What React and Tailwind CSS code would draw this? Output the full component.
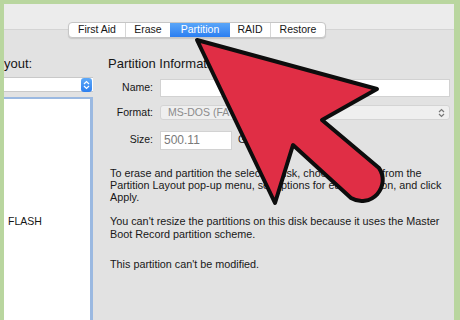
import React from 'react';

const font = { fontFamily: '"Liberation Sans", Arial, sans-serif' };

const tabs = [
  { label: 'First Aid', w: 'w-[56px]' },
  { label: 'Erase', w: 'w-[45px]' },
  { label: 'Partition', w: 'w-[60px]', active: true },
  { label: 'RAID', w: 'w-[40px]' },
  { label: 'Restore', w: 'w-[55px]' },
];

function Stepper({ blue }) {
  return (
    <svg width="7" height="10" viewBox="0 0 7 10" fill="none" stroke={blue ? '#fff' : '#777'} strokeWidth="1.2">
      <path d="M1 4 L3.5 1.5 L6 4" />
      <path d="M1 6 L3.5 8.5 L6 6" />
    </svg>
  );
}

function Row({ label, mt, children }) {
  return (
    <div className={`flex items-center gap-[7px] ${mt}`}>
      <div className="w-[45px] shrink-0 text-right text-[10.5px] text-[#161616]">{label}</div>
      {children}
    </div>
  );
}

export default function App() {
  return (
    <div className="relative w-[460px] h-[320px] overflow-hidden bg-[#b9d69f] pt-[4px] pl-[4px] pr-[6px]" style={font}>
      <div className="h-full flex flex-col bg-[#e2e2e2]">
        {/* title area */}
        <div className="h-[26px] shrink-0 bg-[#ececec] border-b border-[#d4d4d4]" />

        {/* segmented tabs */}
        <div className="-mt-[8px] ml-[64px] flex h-[16px] w-fit rounded-[4px] border border-[#c6c6c6] bg-white shadow-[0_1px_1px_rgba(0,0,0,0.12)] overflow-hidden text-[10.5px] text-[#161616]">
          {tabs.map((t, i) => (
            <div
              key={t.label}
              className={`${t.w} flex items-center justify-center ${i > 0 && !t.active && !tabs[i - 1].active ? 'border-l border-[#d6d6d6]' : ''} ${t.active ? 'bg-gradient-to-b from-[#5aa6f8] to-[#2b7ef1] text-white' : ''}`}
            >
              {t.label}
            </div>
          ))}
        </div>

        <div className="flex flex-1 min-h-0">
          {/* left: layout */}
          <div className="w-[89px] shrink-0 flex flex-col overflow-hidden">
            <div className="mt-[18px] h-[16px] leading-[16px] text-[13px] text-[#161616]">yout:</div>
            <div className="mt-[5px] h-[15px] flex items-center justify-end bg-white border-y border-[#c9c9c9] pr-[1px]">
              <div className="w-[11px] h-[14px] rounded-[3px] bg-gradient-to-b from-[#5ea9f8] to-[#2c7ff0] flex items-center justify-center">
                <Stepper blue />
              </div>
            </div>
            <div className="mt-[5px] flex-1 bg-white border-t-2 border-r-[3px] border-[#9bb9e1]">
              <div className="pt-[116px] pl-[4px] text-[10.5px] leading-[12px] text-[#161616]">FLASH</div>
            </div>
          </div>

          {/* right: partition information */}
          <div className="flex-1 pl-[15px] pr-[4px] flex flex-col">
            <div className="mt-[18px] h-[16px] leading-[16px] text-[13px] text-[#161616]">Partition Information</div>

            <Row label="Name:" mt="mt-[7px]">
              <div className="flex-1 h-[18px] bg-white border border-[#d2d2d2]" />
            </Row>

            <Row label="Format:" mt="mt-[8px]">
              <div className="flex-1 h-[15px] flex items-center justify-between rounded-[3px] bg-[#efefef] border border-[#d4d4d4] pl-[7px] pr-[4px] text-[10.5px] text-[#8c8c8c]">
                <span>MS-DOS (FAT)</span>
                <Stepper />
              </div>
            </Row>

            <Row label="Size:" mt="mt-[10px]">
              <div className="w-[72px] h-[19px] flex items-center bg-white border border-[#d2d2d2] pl-[3px] text-[12px] text-[#7a7a7a]">500.11</div>
              <span className="-ml-[1px] text-[10.5px] text-[#161616]">GB</span>
            </Row>

            <div className="mt-[17px] pl-[2px] text-[10.8px] leading-[12px] text-[#181818]">
              To erase and partition the selected disk, choose a layout from the<br />
              Partition Layout pop-up menu, set options for each partition, and click<br />
              Apply.
            </div>
            <div className="mt-[12px] pl-[2px] text-[10.8px] leading-[13px] text-[#181818]">
              You can't resize the partitions on this disk because it uses the Master<br />
              Boot Record partition scheme.
            </div>
            <div className="mt-[17px] pl-[2px] text-[10.8px] leading-[12px] text-[#181818]">
              This partition can't be modified.
            </div>
          </div>
        </div>
      </div>

      {/* red pointer arrow laid over the window */}
      <svg className="absolute left-0 top-0" width="460" height="320" viewBox="0 0 460 320">
        <path
          d="M197 40 L377 89 L322 120 L379 168 A21 21 0 0 1 351 198 L293 145 L275 203 Z"
          fill="#e02e45"
          stroke="#0d0d0d"
          strokeWidth="4"
          strokeLinejoin="round"
        />
      </svg>
    </div>
  );
}
